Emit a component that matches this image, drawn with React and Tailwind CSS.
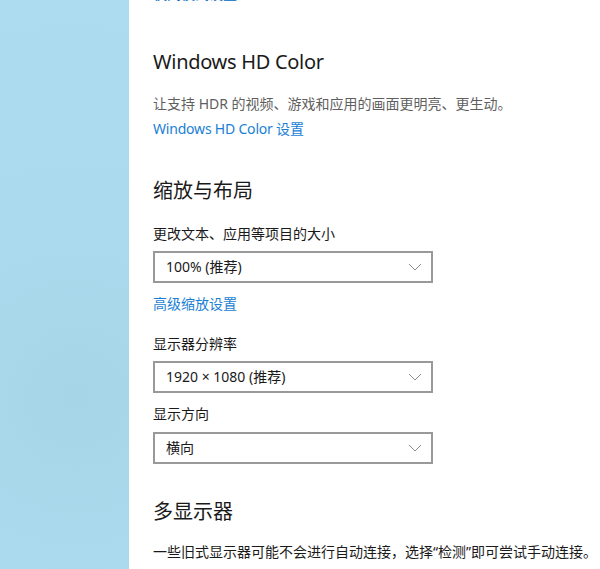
import React from 'react';

const font = { fontFamily: '"Noto Sans", "Noto Sans CJK SC", sans-serif' };

function Dropdown({ value }) {
  return (
    <div className="flex h-[32px] w-[280px] items-center justify-between border-2 border-[#999999] bg-white pl-[11px] pr-[8px]">
      <span className="text-[14px] leading-[20px] text-[#1a1a1a]">{value}</span>
      <svg width="14" height="8" viewBox="0 0 14 8" fill="none" className="mr-[1px]">
        <path d="M1 1l6 6 6-6" stroke="#8c8c8c" strokeWidth="1" />
      </svg>
    </div>
  );
}

export default function App() {
  return (
    <div className="flex h-[569px] w-[600px] overflow-hidden bg-white" style={font}>
      {/* Left panel */}
      <aside className="h-full w-[129px] shrink-0 bg-[radial-gradient(circle_at_60%_70%,#a7d5e8_0%,#abdaee_45%,#addcf0_100%)]" />

      {/* Settings content */}
      <main className="flex flex-1 flex-col pl-[24px]">
        <a className="mt-[-16px] text-[14px] leading-[20px] text-[#0067c0]">夜间模式设置</a>

        <h2 className="mt-[44px] text-[20px] leading-[28px] tracking-[-0.3px] text-[#1a1a1a]">Windows HD Color</h2>
        <p className="mt-[18px] text-[14px] leading-[20px] text-[#5f5f5f]">让支持 HDR 的视频、游戏和应用的画面更明亮、更生动。</p>
        <a className="mt-[5px] text-[14px] leading-[20px] tracking-[-0.2px] text-[#1a7fd4]">Windows HD Color 设置</a>

        <h2 className="mt-[38px] text-[20px] leading-[28px] text-[#1a1a1a]">缩放与布局</h2>
        <label className="mt-[19px] text-[14px] leading-[20px] text-[#1a1a1a]">更改文本、应用等项目的大小</label>
        <div className="mt-[7px]">
          <Dropdown value="100% (推荐)" />
        </div>
        <a className="mt-[11px] text-[14px] leading-[20px] text-[#1a7fd4]">高级缩放设置</a>

        <label className="mt-[20px] text-[14px] leading-[20px] text-[#1a1a1a]">显示器分辨率</label>
        <div className="mt-[7px]">
          <Dropdown value="1920 × 1080 (推荐)" />
        </div>
        <label className="mt-[11px] text-[14px] leading-[20px] text-[#1a1a1a]">显示方向</label>
        <div className="mt-[8px]">
          <Dropdown value="横向" />
        </div>

        <h2 className="mt-[34px] text-[20px] leading-[28px] text-[#1a1a1a]">多显示器</h2>
        <p className="mt-[16px] whitespace-nowrap text-[14px] leading-[20px] text-[#1a1a1a]">
          一些旧式显示器可能不会进行自动连接，选择“检测”即可尝试手动连接。
        </p>
      </main>
    </div>
  );
}
